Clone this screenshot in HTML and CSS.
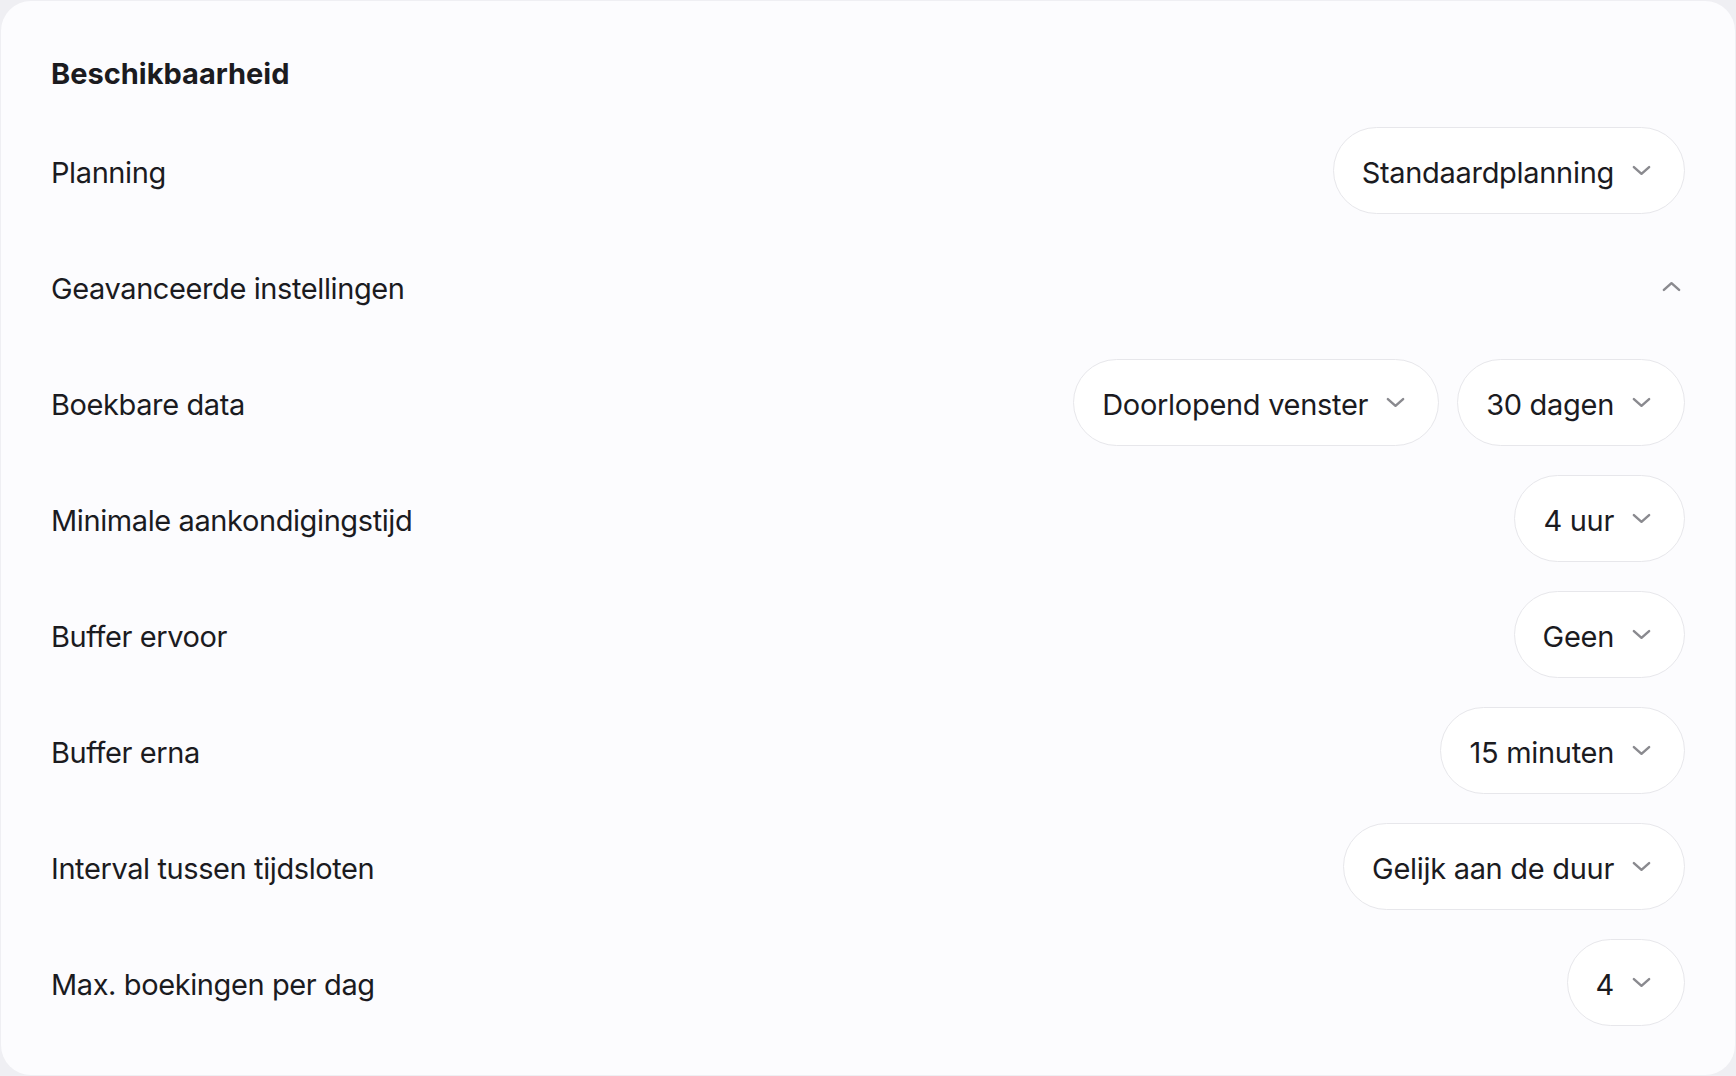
FILE: index.html
```html
<!DOCTYPE html>
<html lang="nl">
<head>
<meta charset="utf-8">
<title>Beschikbaarheid</title>
<link rel="stylesheet" href="styles.css">
</head>
<body>
<main class="card">
  <h2 class="title">Beschikbaarheid</h2>
  <div class="rows">
    <div class="row">
      <span class="label">Planning</span>
      <div class="controls">
        <button class="select">Standaardplanning<svg class="chev" viewBox="0 0 20 11"><path d="M2 2 L10 9 L18 2"/></svg></button>
      </div>
    </div>
    <div class="row">
      <span class="label">Geavanceerde instellingen</span>
      <button class="toggle"><svg class="chev" viewBox="0 0 20 11"><path d="M2 9 L10 2 L18 9"/></svg></button>
    </div>
    <div class="row">
      <span class="label">Boekbare data</span>
      <div class="controls">
        <button class="select">Doorlopend venster<svg class="chev" viewBox="0 0 20 11"><path d="M2 2 L10 9 L18 2"/></svg></button>
        <button class="select">30 dagen<svg class="chev" viewBox="0 0 20 11"><path d="M2 2 L10 9 L18 2"/></svg></button>
      </div>
    </div>
    <div class="row">
      <span class="label">Minimale aankondigingstijd</span>
      <div class="controls">
        <button class="select">4 uur<svg class="chev" viewBox="0 0 20 11"><path d="M2 2 L10 9 L18 2"/></svg></button>
      </div>
    </div>
    <div class="row">
      <span class="label">Buffer ervoor</span>
      <div class="controls">
        <button class="select">Geen<svg class="chev" viewBox="0 0 20 11"><path d="M2 2 L10 9 L18 2"/></svg></button>
      </div>
    </div>
    <div class="row">
      <span class="label">Buffer erna</span>
      <div class="controls">
        <button class="select">15 minuten<svg class="chev" viewBox="0 0 20 11"><path d="M2 2 L10 9 L18 2"/></svg></button>
      </div>
    </div>
    <div class="row">
      <span class="label">Interval tussen tijdsloten</span>
      <div class="controls">
        <button class="select">Gelijk aan de duur<svg class="chev" viewBox="0 0 20 11"><path d="M2 2 L10 9 L18 2"/></svg></button>
      </div>
    </div>
    <div class="row">
      <span class="label">Max. boekingen per dag</span>
      <div class="controls">
        <button class="select">4<svg class="chev" viewBox="0 0 20 11"><path d="M2 2 L10 9 L18 2"/></svg></button>
      </div>
    </div>
  </div>
</main>
</body>
</html>
```
FILE: styles.css
```css
html, body {
  margin: 0;
  height: 100%;
}
body {
  box-sizing: border-box;
  padding: 1px;
  background: #efeff3;
  font-family: Inter, "Noto Sans", "Liberation Sans", sans-serif;
  color: #1b1b1f;
}
.card {
  box-sizing: border-box;
  height: 1074px;
  background: #fcfcfe;
  border-radius: 30px;
  padding: 50px;
  display: flex;
  flex-direction: column;
  gap: 30px;
}
.title {
  margin: 0;
  font-size: 29px;
  font-weight: 700;
  line-height: 46px;
  letter-spacing: 0;
}
.rows {
  display: flex;
  flex-direction: column;
  gap: 29px;
}
.row {
  display: flex;
  align-items: center;
  justify-content: space-between;
  min-height: 87px;
}
.label {
  font-size: 29px;
  font-weight: 400;
  letter-spacing: -0.4px;
  padding-top: 3px;
}
.controls {
  display: flex;
  gap: 18px;
}
.select {
  box-sizing: border-box;
  height: 87px;
  border: 1.5px solid #e7e7eb;
  border-radius: 44px;
  background: #ffffff;
  padding: 3px 33px 0 28px;
  display: flex;
  align-items: center;
  gap: 18px;
  font-family: inherit;
  font-size: 29px;
  letter-spacing: -0.3px;
  color: #1b1b1f;
  cursor: pointer;
}
.select .chev {
  margin-top: -3px;
}
.toggle {
  border: 0;
  background: transparent;
  padding: 0 4px 0 0;
  display: flex;
  align-items: center;
  cursor: pointer;
}
.chev {
  width: 19px;
  height: 11px;
  fill: none;
  stroke: #8a8a8f;
  stroke-width: 2.6;
  stroke-linecap: round;
  stroke-linejoin: round;
}
```
